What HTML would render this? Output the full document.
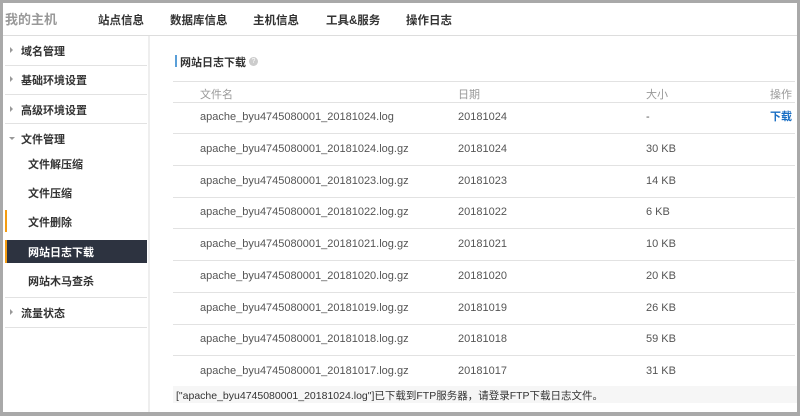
<!DOCTYPE html>
<html><head><meta charset="utf-8"><style>
*{margin:0;padding:0;box-sizing:border-box}
body{width:800px;height:416px;background:#a9a9a9;position:relative;overflow:hidden;font-family:"Liberation Sans","Noto Sans CJK SC",sans-serif;font-size:11px;color:#333}
#frame{position:absolute;left:3px;top:3px;width:794px;height:409px;background:#fff}
.a{position:absolute;white-space:nowrap}
.hl{position:absolute;height:1px;background:#e2e2e2}
.nav{font-weight:bold;font-size:11.5px;color:#333;top:9px}
.sb{left:18px;font-weight:bold;color:#333;font-size:11px}
.sub{left:25px;font-weight:bold;color:#333;font-size:11px}
.tri{position:absolute;width:0;height:0;border-left:3px solid #999;border-top:3px solid transparent;border-bottom:3px solid transparent}
.r{color:#555;font-size:11px;line-height:14px}
</style></head><body>
<div id="frame">
<div class="a" style="left:2px;top:6px;font-size:13px;font-weight:bold;color:#999">我的主机</div>
<div class="a nav" style="left:95px">站点信息</div>
<div class="a nav" style="left:167px">数据库信息</div>
<div class="a nav" style="left:250px">主机信息</div>
<div class="a nav" style="left:323px">工具&amp;服务</div>
<div class="a nav" style="left:403px">操作日志</div>
<div class="hl" style="left:0;top:32px;width:794px;background:#ddd"></div>
<div style="position:absolute;left:145px;top:33px;width:2px;height:376px;background:#eee"></div>

<div class="tri" style="left:7px;top:44px"></div><div class="a sb" style="top:40px">域名管理</div>
<div class="hl" style="left:2px;top:62px;width:142px"></div>
<div class="tri" style="left:7px;top:73px"></div><div class="a sb" style="top:69px">基础环境设置</div>
<div class="hl" style="left:2px;top:91px;width:142px"></div>
<div class="tri" style="left:7px;top:103px"></div><div class="a sb" style="top:99px">高级环境设置</div>
<div class="hl" style="left:2px;top:120px;width:142px"></div>
<div class="a" style="left:6px;top:134px;width:0;height:0;border-top:3px solid #999;border-left:3px solid transparent;border-right:3px solid transparent"></div>
<div class="a sb" style="top:128px">文件管理</div>
<div class="a sub" style="top:153px">文件解压缩</div>
<div class="a sub" style="top:182px">文件压缩</div>
<div style="position:absolute;left:2px;top:207px;width:2px;height:22px;background:#f39c12"></div>
<div class="a sub" style="top:211px">文件删除</div>
<div style="position:absolute;left:2px;top:237px;width:142px;height:23px;background:#2d3340;border-left:2px solid #f39c12"></div>
<div class="a sub" style="top:241px;color:#fff">网站日志下载</div>
<div class="a sub" style="top:270px">网站木马查杀</div>
<div class="hl" style="left:2px;top:294px;width:142px"></div>
<div class="tri" style="left:7px;top:306px"></div><div class="a sb" style="top:302px">流量状态</div>
<div class="hl" style="left:2px;top:324px;width:142px"></div>

<div style="position:absolute;left:172px;top:52px;width:2px;height:12px;background:#5a9fd8"></div>
<div class="a" style="left:177px;top:51px;font-weight:bold;font-size:11px">网站日志下载</div>
<div class="a" style="left:246px;top:54px;width:9px;height:9px;border-radius:50%;background:#ccc;color:#fff;font-size:7px;text-align:center;line-height:9px">?</div>

<div class="hl" style="left:170px;top:78px;width:622px"></div>
<div class="a" style="left:197px;top:83px;color:#999">文件名</div>
<div class="a" style="left:455px;top:83px;color:#999">日期</div>
<div class="a" style="left:643px;top:83px;color:#999">大小</div>
<div class="a" style="left:767px;top:83px;color:#999">操作</div>
<div class="hl" style="left:170px;top:99px;width:622px"></div>

<div id="rows"></div>
<div style="position:absolute;left:170px;top:383px;width:624px;height:17px;background:#f6f6f6"></div>
<div class="a" style="left:173px;top:385px;font-size:10.5px;color:#333">["apache_byu4745080001_20181024.log"]已下载到FTP服务器，请登录FTP下载日志文件。</div>
</div>
<script>
var d=[["20181024.log","20181024","-"],["20181024.log.gz","20181024","30 KB"],["20181023.log.gz","20181023","14 KB"],["20181022.log.gz","20181022","6 KB"],["20181021.log.gz","20181021","10 KB"],["20181020.log.gz","20181020","20 KB"],["20181019.log.gz","20181019","26 KB"],["20181018.log.gz","20181018","59 KB"],["20181017.log.gz","20181017","31 KB"]];
var h="";
for(var i=0;i<d.length;i++){var c=114+i*31.75;var y=c-7;
h+='<div class="a r" style="left:197px;top:'+y+'px">apache_byu4745080001_'+d[i][0]+'</div>';
h+='<div class="a r" style="left:455px;top:'+y+'px">'+d[i][1]+'</div>';
h+='<div class="a r" style="left:643px;top:'+y+'px">'+d[i][2]+'</div>';
if(i==0)h+='<div class="a r" style="left:767px;top:'+y+'px;color:#1a6fc4;font-weight:bold">下载</div>';
if(i<8)h+='<div class="hl" style="left:170px;top:'+(c+16)+'px;width:622px"></div>';}
document.getElementById("rows").outerHTML=h;
</script>
</body></html>
